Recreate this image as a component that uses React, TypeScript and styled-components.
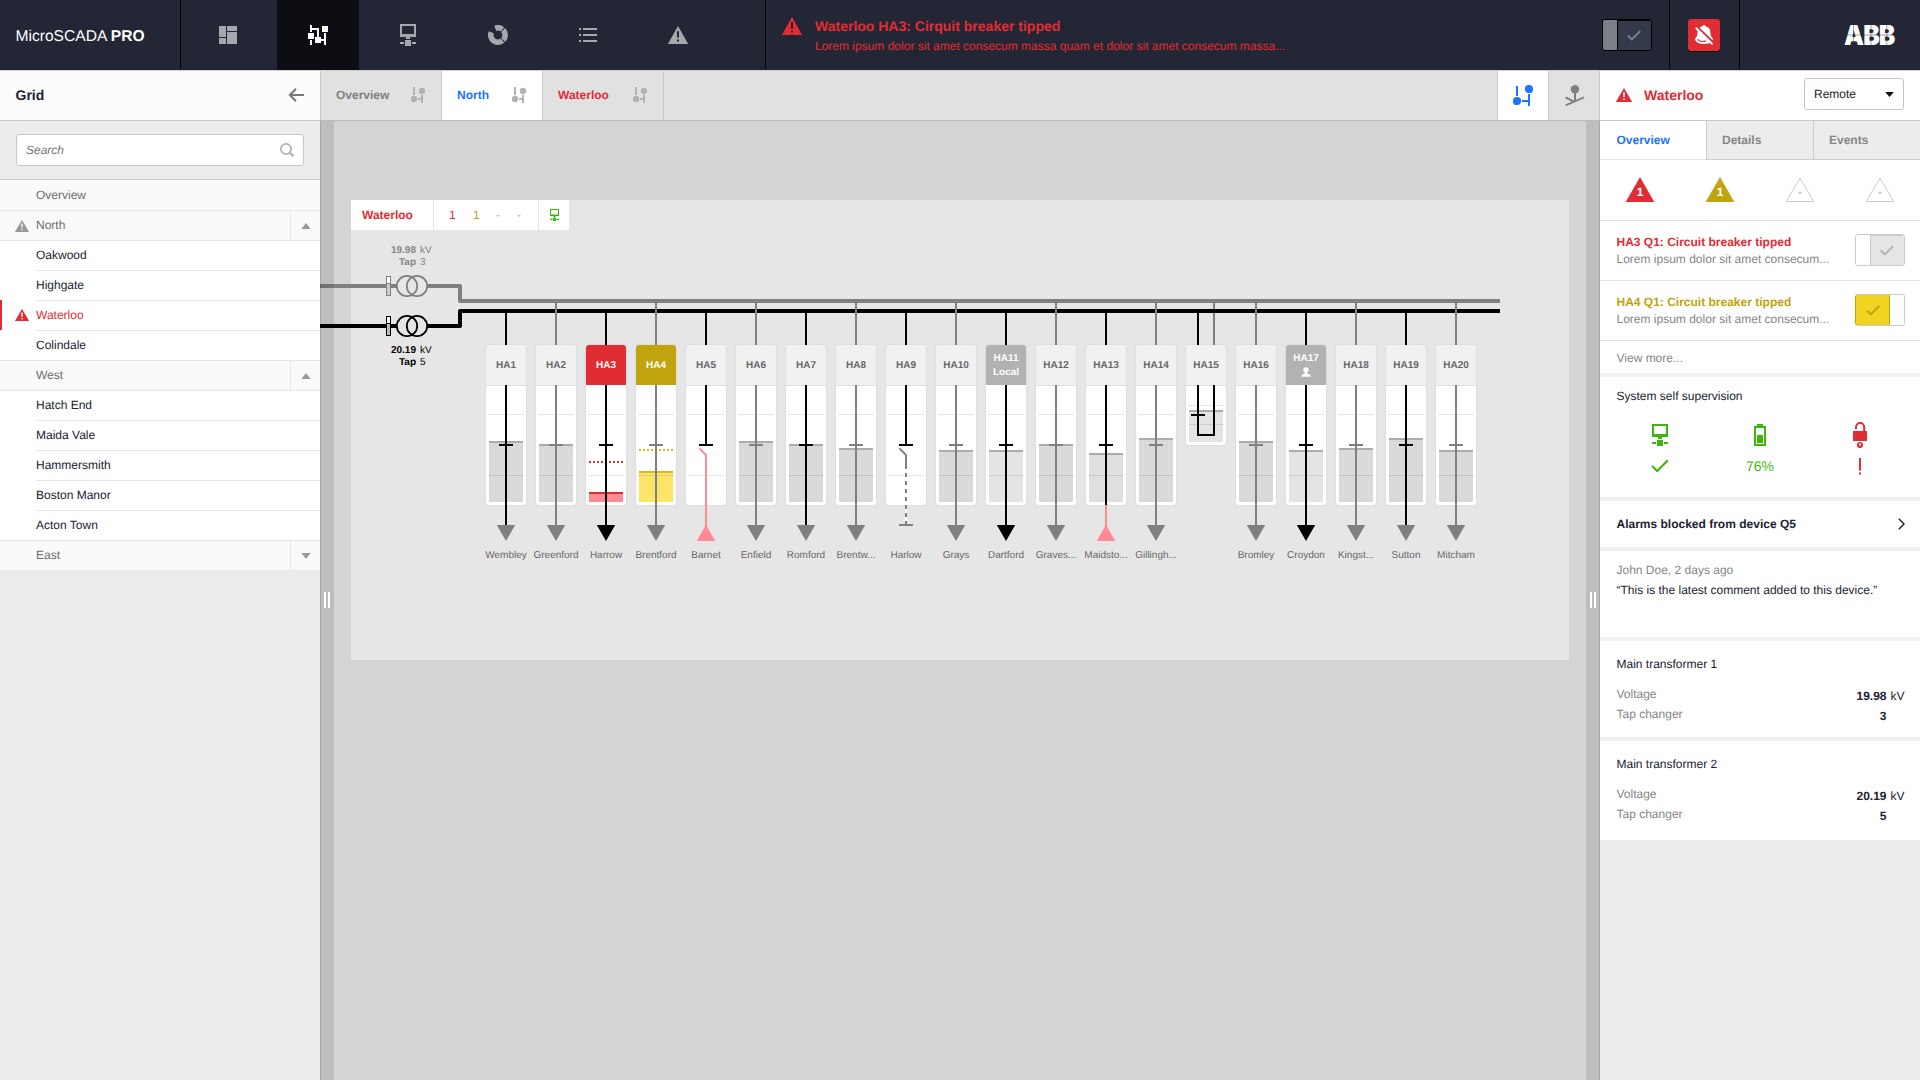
import React from "react";
import styled, { createGlobalStyle, css } from "styled-components";

const c = {
  navy: "#232635",
  red: "#e22c33",
  pink: "#ff8a93",
  yellow: "#c1a30e",
  blue: "#1c73ff",
  green: "#3fb60f",
  grey: "#808080",
  mid: "#b2b2b2",
  ink: "#202232",
};

const GlobalStyle = createGlobalStyle`
  * { box-sizing: border-box; }
  body {
    margin: 0;
    overflow: hidden;
    background: #ececec;
    font-family: "Liberation Sans", Arial, sans-serif;
    font-size: 12px;
    text-rendering: geometricPrecision;
    color: ${c.ink};
  }
  svg { display: block; flex: none; }
`;

/* ---------- icons ---------- */

const Warn = ({ w = 20, h = 18, color = "#a6a8ae" }) => (
  <svg width={w} height={h} viewBox="0 0 20 18" preserveAspectRatio="none">
    <path fill={color} fillRule="evenodd" d="M10 0L20.2 18H-.2ZM9 5.2v6.4h2V5.2ZM9 13.4v2.1h2v-2.1Z" />
  </svg>
);

const Monitor = ({ w = 16, h = 22, color = "#a6a8ae" }) => (
  <svg width={w} height={h} viewBox="0 0 16 22" preserveAspectRatio="none" fill={color}>
    <path fillRule="evenodd" d="M0 0h16v13H0ZM2 2v8h12V2Z" />
    <path d="M6 13h4v2H6ZM5 16h6v6H5ZM0 18h4v2H0ZM12 18h4v2h-4Z" />
  </svg>
);

const Dashboard = () => (
  <svg width="18" height="18" fill="#a6a8ae">
    <path d="M0 0h7v11H0ZM8 0h10v5H8ZM0 12h7v6H0ZM8 6h10v12H8Z" />
  </svg>
);

const GridIcon = () => (
  <svg width="20" height="20" fill="#fff">
    <path d="M2 0h2v3h7v9h2v2h3V8h2v12h-2v-4h-3v2H7v-6h2V5H4v2H2ZM14 1h6v6h-6ZM0 8h6v6H0ZM2 15h2v5H2Z" />
  </svg>
);

const polar = (deg: number) => {
  const a = ((deg - 90) * Math.PI) / 180;
  return `${(10 + 7.2 * Math.cos(a)).toFixed(2)} ${(10 + 7.2 * Math.sin(a)).toFixed(2)}`;
};

const Donut = () => (
  <svg width="20" height="20" fill="none" stroke="#a6a8ae" strokeWidth="5.6">
    <path d={`M${polar(-22)}A7.2 7.2 0 0 1 ${polar(38)}`} />
    <path d={`M${polar(45)}A7.2 7.2 0 0 1 ${polar(134)}`} />
    <path d={`M${polar(141)}A7.2 7.2 0 0 1 ${polar(292)}`} />
  </svg>
);

const List = () => (
  <svg width="18" height="14" fill="#a6a8ae">
    <path d="M0 0h2v2H0ZM4 0h14v2H4ZM0 6h2v2H0ZM4 6h14v2H4ZM0 12h2v2H0ZM4 12h14v2H4Z" />
  </svg>
);

const NodeSmall = () => (
  <svg width="14" height="16" fill="#b2b2b2">
    <path d="M2 0h2v8H2ZM7 11h3V8h2v8h-2v-3H7Z" />
    <circle cx="11" cy="4" r="3.2" />
    <circle cx="3" cy="12" r="3.2" />
  </svg>
);

const NodeLarge = () => (
  <svg width="20" height="21" fill={c.blue}>
    <path d="M3 1h2v10H3ZM9 15h6V9h2v12h-2v-4H9Z" />
    <circle cx="16" cy="4" r="4.1" />
    <circle cx="4" cy="16" r="4.1" />
  </svg>
);

const Topology = () => (
  <svg width="20" height="21" fill="none" stroke={c.grey} strokeWidth="2">
    <circle cx="10" cy="4.3" r="4.2" fill={c.grey} stroke="none" />
    <path d="M10 8v8M.6 12.5L9.5 16.8M.6 20.3L19 12.3" />
  </svg>
);

const BellOff = () => (
  <svg width="32" height="32">
    <path fill="#fff" d="M16 6c1 0 1.4.6 1.6 1.3 3.6.8 4.8 3.6 4.9 7 .1 2.400.8 3.500 2 4.800.9 1.200.3 2.500-.8 3.500C21.800 24.400 19 25 16 25s-5.800-.6-7.700-2.400c-1.100-1-1.700-2.300-.8-3.500 1.200-1.300 1.900-2.400 2-4.800.1-3.400 1.300-6.200 4.900-7C14.600 6.600 15 6 16 6Z" />
    <path fill="none" stroke={c.red} strokeWidth="1.200" d="M9.500 20.300c2 2.300 6 2.500 8.500 1.600" />
    <path stroke={c.red} strokeWidth="1.800" d="M9.500 7.800L26 24" />
    <path stroke="#fff" strokeWidth="1.900" d="M7.700 8.800L24.500 25.400" />
  </svg>
);

const Logo = () => (
  <svg width="60" height="40" viewBox="-5 -10 60 40" fill="#fff" fontFamily="Inter, 'Liberation Sans', sans-serif" fontSize="27.500" fontWeight="900">
    <text x="0" y="20" textLength="20" lengthAdjust="spacingAndGlyphs">A</text>
    <text x="19.300" y="20" textLength="16.500" lengthAdjust="spacingAndGlyphs">B</text>
    <text x="34.700" y="20" textLength="16.500" lengthAdjust="spacingAndGlyphs">B</text>
    <path stroke={c.navy} strokeWidth=".8" strokeOpacity=".55" d="M0 10H50M9.500 0V20M27 0V20M42.800 0V20" />
  </svg>
);

const Check = ({ color, w = 14, h = 11, sw = 2 }: { color: string; w?: number; h?: number; sw?: number }) => (
  <svg width={w} height={h} viewBox="0 0 14 11" fill="none" stroke={color} strokeWidth={sw}>
    <path d="M.8 5.500L4.800 9.400L13.200 1" />
  </svg>
);

const Battery = () => (
  <svg width="12" height="22" fill={c.green}>
    <path fillRule="evenodd" d="M3 0h6v2h3v20H0V2h3ZM2 4v16h8V4Z" />
    <path d="M3 11h6v8H3Z" />
  </svg>
);

const Lock = () => (
  <svg width="14" height="26">
    <path fill="none" stroke={c.red} strokeWidth="2" d="M3 7V5.200a4.100 4.100 0 0 1 8.200 0V9" />
    <path fill={c.red} d="M0 9h14v10H0Z" />
    <circle cx="7" cy="23" r="3.100" fill={c.red} />
    <path fill="#fff" d="M6.200 21.600h1.800v2h-1.800Z" />
  </svg>
);

const Bang = () => (
  <svg width="2" height="17" fill={c.red}>
    <path d="M0 0h2v12.500H0ZM0 14.500h2v2H0Z" />
  </svg>
);

const User = () => (
  <svg width="10" height="10" fill="#fff">
    <circle cx="5" cy="2.900" r="2.600" />
    <path d="M4 5h2v1.500l2.600.9c.8.400 1 1.200 1 2.400H.4c0-1.200.2-2 1-2.400L4 6.500Z" />
  </svg>
);

/* ---------- header ---------- */

const Page = styled.div`
  display: flex;
  flex-direction: column;
  width: 1920px;
  height: 1080px;
  background: #ececec;
`;

const Header = styled.header`
  display: flex;
  height: 70px;
  flex: none;
  background: ${c.navy};
`;

const headerCell = css`
  display: flex;
  height: 69px;
  border-right: 1px solid #000;
`;

const Brand = styled.div`
  ${headerCell}
  width: 181px;
  padding: 5px 0 0 15.5px;
  align-items: center;
  color: #fff;
  font-size: 15.6px;
  white-space: pre;
`;

const Nav = styled.nav`
  ${headerCell}
  width: 585px;
  height: 69px;
  padding-left: 6px;
  gap: 8px;
`;

const NavItem = styled.div<{ $active?: boolean; $dy?: number }>`
  display: flex;
  width: 82px;
  height: 70px;
  align-items: center;
  justify-content: center;
  padding-top: ${(p) => p.$dy ?? 0}px;
  background: ${(p) => (p.$active ? "#0d0e13" : "none")};
`;

const Alert = styled.div`
  ${headerCell}
  width: 904px;
  color: ${c.red};
`;

const AlertIcon = styled.div`
  padding: 17px 13px 0 16px;
`;

const AlertText = styled.div`
  flex: 1;
  padding-top: 16px;
`;

const AlertTitle = styled.div`
  font-size: 14px;
  font-weight: bold;
  line-height: 20px;
`;

const AlertSub = styled.div`
  line-height: 20px;
`;

const Toggle = styled.div<{ $kind: "dark" | "off" | "on" }>`
  display: flex;
  width: 50px;
  height: 32px;
  border-radius: 3px;
  overflow: hidden;
  flex: none;
  flex-direction: ${(p) => (p.$kind === "on" ? "row-reverse" : "row")};
  border: 1px solid ${(p) => (p.$kind === "dark" ? "#000" : "#cbcbcb")};
  ${(p) => p.$kind === "on" && css`border-width: 1px 1px 1px 0; background: #fff;`}
`;

const Knob = styled.span<{ $kind: "dark" | "off" | "on" }>`
  width: ${(p) => (p.$kind === "on" ? "auto" : "15px")};
  flex: ${(p) => (p.$kind === "on" ? "1" : "none")};
  background: ${(p) => (p.$kind === "dark" ? "#7b7f88" : "#fff")};
  border-right: ${(p) => (p.$kind === "dark" ? "1px solid #000" : p.$kind === "off" ? "1px solid #cbcbcb" : "none")};
`;

const Track = styled.span<{ $kind: "dark" | "off" | "on" }>`
  display: flex;
  align-items: center;
  justify-content: center;
  ${(p) =>
    p.$kind === "on"
      ? css`
          width: 35px;
          margin: -1px 0;
          border: 1px solid ${c.yellow};
          border-radius: 3px 0 0 3px;
          background: #f1d322;
        `
      : p.$kind === "off"
      ? css`
          flex: 1;
          background: #e5e5e5;
          box-shadow: inset 0 1px #cbcbcb;
          padding-right: 2px;
        `
      : css`
          flex: 1;
          background: #343a4a;
          box-shadow: inset 0 1px #000;
          padding-right: 1px;
        `}
`;

const ToggleSlot = styled.div`
  padding: 19px 17px 0 0;
`;

const MuteCell = styled.div`
  ${headerCell}
  width: 70px;
  padding: 19px 0 0 18px;
`;

const MuteButton = styled.div`
  width: 32px;
  height: 32px;
  border-radius: 3px;
  background: ${c.red};
  box-shadow: 0 1px #000;
`;

const LogoCell = styled.div`
  display: flex;
  flex: 1;
  justify-content: flex-end;
  padding: 15px 21px 0 0;
`;

/* ---------- columns ---------- */

const Main = styled.main`
  display: flex;
  flex: 1;
  min-height: 0;
`;

const Bar = styled.div`
  display: flex;
  height: 51px;
  flex: none;
  align-items: center;
  padding-bottom: 1px;
  border-top: 1px solid #cfcfd1;
  border-bottom: 1px solid #cacaca;
`;

const Sidebar = styled.aside`
  width: 320px;
  display: flex;
  flex-direction: column;
`;

const SideHead = styled(Bar)`
  padding: 0 16px 1px 15.5px;
  justify-content: space-between;
  background: #fcfcfc;
  font-size: 14px;
  font-weight: bold;
`;

const SearchWrap = styled.div`
  height: 59px;
  padding: 13px 16px 0;
  border-bottom: 1px solid #d0d0d0;
`;

const SearchBox = styled.div`
  display: flex;
  height: 32px;
  align-items: center;
  justify-content: space-between;
  padding: 0 9px;
  border: 1px solid #c8c8c8;
  border-radius: 3px;
  background: #fff;
  color: #777;
  font-style: italic;
`;

const Tree = styled.div`
  display: flex;
  flex-direction: column;
`;

const TreeRow = styled.div<{ $group?: boolean; $alarm?: boolean }>`
  display: flex;
  height: 30px;
  align-items: stretch;
  background: ${(p) => (p.$group ? "#fafafa" : "#fff")};
  color: ${(p) => (p.$alarm ? c.red : p.$group ? "#6c6c6c" : c.ink)};
  box-shadow: ${(p) => (p.$alarm ? `inset 2px 0 ${c.red}` : "none")};
`;

const TreeIcon = styled.span<{ $line?: boolean }>`
  display: flex;
  width: 36px;
  padding: 0 0 0 15px;
  align-items: center;
  border-top: ${(p) => (p.$line ? "1px solid #e6e6e6" : "none")};
`;

const TreeLabel = styled.span<{ $line?: boolean }>`
  flex: 1;
  line-height: ${(p) => (p.$line ? 29 : 30)}px;
  border-top: ${(p) => (p.$line ? "1px solid #e6e6e6" : "none")};
`;

const TreeToggle = styled.span`
  display: flex;
  width: 30px;
  align-items: center;
  justify-content: center;
  border: solid #e6e6e6;
  border-width: 1px 0 0 1px;
`;

const Center = styled.section`
  display: flex;
  flex-direction: column;
  width: 1280px;
`;

const TabBar = styled(Bar)`
  align-items: stretch;
  padding-bottom: 0;
  background: #e1e1e1;
  border-left: 1px solid #c8c8c8;
  border-right: 1px solid #c8c8c8;
  border-bottom-color: #bdbdbd;
`;

const Tab = styled.div<{ $w: number; $color: string; $active?: boolean }>`
  display: flex;
  width: ${(p) => p.$w}px;
  padding: 0 16px 1px 15px;
  align-items: center;
  justify-content: space-between;
  border-right: 1px solid #c8c8c8;
  background: ${(p) => (p.$active ? "#fff" : "none")};
  color: ${(p) => p.$color};
  font-weight: bold;
`;

const ViewButtons = styled.div`
  display: flex;
  margin-left: auto;
`;

const ViewButton = styled.div<{ $active?: boolean }>`
  display: flex;
  width: 51px;
  align-items: center;
  padding-left: ${(p) => (p.$active ? 15 : 16)}px;
  border-left: 1px solid #c8c8c8;
  background: ${(p) => (p.$active ? "#fff" : "none")};
`;

const Workspace = styled.div`
  display: flex;
  flex: 1;
  background: #d4d4d4;
`;

const Strip = styled.div<{ $side: "left" | "right" }>`
  position: relative;
  z-index: 1;
  display: flex;
  width: 14px;
  align-items: center;
  gap: 2px;
  padding-bottom: 1px;
  padding-left: ${(p) => (p.$side === "left" ? 3 : 4)}px;
  background: rgba(0, 0, 0, 0.1);
  border: 0 solid rgba(0, 0, 0, 0.12);
  border-${(p) => p.$side}-width: 1px;
`;

const Grip = styled.span`
  width: 2px;
  height: 16px;
  background: #fff;
`;

const Canvas = styled.div`
  flex: 1;
  padding: 79px 17px 0;
`;

const Station = styled.div`
  position: relative;
  height: 460px;
  background: #e6e6e6;
`;

const StationHead = styled.div`
  display: flex;
  width: 218px;
  height: 30px;
  gap: 1px;
`;

const HeadCell = styled.div<{ $w: number }>`
  display: flex;
  width: ${(p) => p.$w}px;
  align-items: center;
  justify-content: center;
  background: #fff;
`;

const StationName = styled(HeadCell)`
  justify-content: flex-start;
  padding-left: 11px;
  color: ${c.red};
  font-weight: bold;
`;

const Counts = styled(HeadCell)`
  justify-content: flex-start;
  padding-left: 15px;
`;

const Count = styled.span<{ $w: number; $color: string }>`
  width: ${(p) => p.$w}px;
  color: ${(p) => p.$color};
`;

const BusLines = styled.svg`
  position: absolute;
  left: -31px;
  top: 70px;
`;

const Readout = styled.div<{ $y: number; $color: string }>`
  position: absolute;
  left: 25px;
  top: ${(p) => p.$y}px;
  display: grid;
  grid-template-columns: 40px 20px;
  column-gap: 4px;
  font-size: 10px;
  line-height: 12px;
  color: ${(p) => p.$color};
  b { text-align: right; }
`;

const FeederRow = styled.div`
  position: absolute;
  left: 135px;
  top: 103px;
  display: flex;
  gap: 10px;
`;

const FeederBox = styled.div`
  position: relative;
  width: 40px;
  height: 262px;
  padding-top: 42px;
  display: flex;
  flex-direction: column;
  align-items: center;
`;

const Card = styled.div<{ $short?: boolean }>`
  width: 40px;
  height: ${(p) => (p.$short ? 100 : 160)}px;
  flex: none;
  border-radius: 3px;
  overflow: hidden;
  background: #fff;
`;

const CardRing = styled.div`
  border-radius: 3px;
  box-shadow: 0 0 0 1px #dedede;
`;

const CardHead = styled.div<{ $bg: string; $color: string; $line: boolean }>`
  display: flex;
  flex-direction: column;
  height: 40px;
  padding-top: 2px;
  align-items: center;
  justify-content: center;
  background: ${(p) => p.$bg};
  color: ${(p) => p.$color};
  box-shadow: ${(p) => (p.$line ? "0 1px #dcdcdc" : "none")};
  font-size: 10px;
  font-weight: bold;
  line-height: 14px;
`;

const IconLine = styled.span`
  display: flex;
  height: 12px;
  align-items: center;
  margin-bottom: 2px;
`;

const Wiring = styled.svg`
  position: absolute;
  left: 0;
  top: 0;
`;

const FeederName = styled.div`
  margin-top: 44px;
  font-size: 10px;
  line-height: 14px;
  color: #666;
  white-space: nowrap;
`;

/* ---------- details panel ---------- */

const Details = styled.aside`
  width: 320px;
  display: flex;
  flex-direction: column;
`;

const DetailsHead = styled(Bar)`
  padding: 0 16px 1px;
  background: #fff;
  color: ${c.red};
  font-size: 14px;
  font-weight: bold;
`;

const HeadName = styled.span`
  flex: 1;
  padding-left: 12px;
`;

const Select = styled.div`
  display: flex;
  width: 100px;
  height: 32px;
  margin-top: -2px;
  padding: 0 9px;
  align-items: center;
  justify-content: space-between;
  border: 1px solid #c4c4c4;
  border-radius: 3px;
  color: #222;
  font-size: 12px;
  font-weight: normal;
`;

const DetailTabs = styled.div`
  display: grid;
  grid-template-columns: 106px 107px 107px;
  height: 39px;
  flex: none;
`;

const DetailTab = styled.div<{ $active?: boolean }>`
  padding-left: ${(p) => (p.$active ? 16.5 : 15)}px;
  line-height: 38px;
  font-weight: bold;
  color: ${(p) => (p.$active ? c.blue : "#858585")};
  background: ${(p) => (p.$active ? "#fff" : "#ececec")};
  border-bottom: 1px solid ${(p) => (p.$active ? "#e4e4e4" : "#cdcdcd")};
  border-left: ${(p) => (p.$active ? "none" : "1px solid #cdcdcd")};
`;

const Levels = styled.div`
  display: grid;
  grid-template-columns: repeat(4, 80px);
  justify-items: center;
  height: 60px;
  padding-top: 17px;
  background: #fff;
`;

const AlarmRow = styled.div`
  display: flex;
  height: 60px;
  padding: 13px 15px 0 16.5px;
  justify-content: space-between;
  border-top: 1px solid #e2e2e2;
  background: #fff;
`;

const AlarmText = styled.div<{ $color: string }>`
  line-height: 17px;
  color: #858585;
  b { color: ${(p) => p.$color}; }
`;

const ViewMore = styled.div`
  height: 33px;
  padding-left: 16.5px;
  line-height: 34px;
  color: #858585;
  border-top: 1px solid #e2e2e2;
  background: #fff;
`;

const Section = styled.div<{ $h: number; $pt: number }>`
  height: ${(p) => p.$h}px;
  padding: ${(p) => p.$pt}px 15.5px 0 16.5px;
  border-top: 4px solid #f1f1f1;
  background: #fff;
  line-height: 20px;
`;

const LinkSection = styled(Section)`
  display: flex;
  padding-right: 15px;
  justify-content: space-between;
  font-weight: bold;
`;

const Supervision = styled.div`
  display: grid;
  grid-template-columns: repeat(3, 100px);
  justify-content: center;
  width: 300px;
  margin-left: -6.5px;
  padding-top: 16px;
`;

const SupItem = styled.div`
  display: flex;
  flex-direction: column;
  align-items: center;
  color: ${c.green};
`;

const SupIcon = styled.div`
  display: flex;
  height: 26px;
  align-items: center;
`;

const SupValue = styled.div`
  display: flex;
  height: 20px;
  margin-top: 8px;
  align-items: center;
  font-size: 14px;
`;

const Muted = styled.div`
  color: #858585;
`;

const Reading = styled.div`
  display: grid;
  grid-template-columns: 1fr auto 15px;
  column-gap: 3px;
  color: #858585;
  b, i { position: relative; top: 2px; color: ${c.ink}; font-style: normal; text-align: right; }
`;

const ReadingTitle = styled.div`
  margin-bottom: 10px;
`;

/* ---------- data ---------- */

type Feeder = {
  name: string;
  bus: "a" | "b";
  place?: string;
  top?: number;
  fill?: string;
  kind?: "plain" | "red" | "yellow" | "local" | "user" | "open" | "dashed" | "back" | "loop";
  darkArrow?: boolean;
};

const FILL = "#d9d9d9";
const LIGHT = "#e4e4e4";

const feeders: Feeder[] = [
  { name: "HA1", bus: "b", place: "Wembley", top: 441 },
  { name: "HA2", bus: "a", place: "Greenford", top: 444 },
  { name: "HA3", bus: "b", place: "Harrow", top: 492, kind: "red", darkArrow: true },
  { name: "HA4", bus: "a", place: "Brentford", top: 471, kind: "yellow" },
  { name: "HA5", bus: "b", place: "Barnet", kind: "open" },
  { name: "HA6", bus: "a", place: "Enfield", top: 441 },
  { name: "HA7", bus: "b", place: "Romford", top: 444 },
  { name: "HA8", bus: "a", place: "Brentw...", top: 448 },
  { name: "HA9", bus: "b", place: "Harlow", kind: "dashed" },
  { name: "HA10", bus: "a", place: "Grays", top: 450 },
  { name: "HA11", bus: "b", place: "Dartford", top: 450, fill: LIGHT, kind: "local", darkArrow: true },
  { name: "HA12", bus: "a", place: "Graves...", top: 444 },
  { name: "HA13", bus: "b", place: "Maidsto...", top: 453, fill: "#dfdfdf", kind: "back" },
  { name: "HA14", bus: "a", place: "Gillingh...", top: 438 },
  { name: "HA15", bus: "b", top: 410, fill: LIGHT, kind: "loop" },
  { name: "HA16", bus: "a", place: "Bromley", top: 441 },
  { name: "HA17", bus: "b", place: "Croydon", top: 450, fill: LIGHT, kind: "user", darkArrow: true },
  { name: "HA18", bus: "a", place: "Kingst...", top: 448 },
  { name: "HA19", bus: "b", place: "Sutton", top: 438 },
  { name: "HA20", bus: "a", place: "Mitcham", top: 450 },
];

const headStyle = (kind?: string): [string, string, boolean] => {
  if (kind === "red") return [c.red, "#fff", false];
  if (kind === "yellow") return [c.yellow, "#fff", false];
  if (kind === "local" || kind === "user") return [c.mid, "#fff", false];
  return ["#f1f1f1", "#666", true];
};

/* Vertical positions inside the wiring drawing are counted from the upper bus bar. */
const Y = (v: number) => v - 303;

const FeederWiring = ({ f }: { f: Feeder }) => {
  const ink = f.bus === "a" ? c.grey : "#000";
  const loop = f.kind === "loop";
  const bottom = loop ? 442 : 502;
  const edge = f.kind === "red" ? c.red : f.kind === "yellow" ? "#dfb71c" : "#acacac";
  const fill = f.kind === "red" ? c.pink : f.kind === "yellow" ? "#fae568" : f.fill ?? FILL;
  const limit = f.kind === "red" ? 462 : f.kind === "yellow" ? 450 : 0;
  const cut = f.kind === "open" || f.kind === "dashed";
  const back = f.kind === "open" || f.kind === "back";
  const end = cut ? 446 : f.kind === "back" ? 505 : 526;
  const grid = loop ? [405.5, 424.5] : [414.5, 475.5];
  return (
    <Wiring width="40" height="240" fill="none">
      {f.top && <rect x="3" y={Y(f.top)} width="34" height={bottom - f.top} fill={fill} />}
      {f.top && <rect x="3" y={Y(f.top)} width="34" height="2" fill={edge} />}
      {grid.map((g) => (
        <path key={g} d={`M2.500 ${Y(g)}H38`} stroke="#000" strokeOpacity=".13" strokeDasharray="3 1" />
      ))}
      {limit > 0 && (
        <path d={`M3 ${Y(limit)}H37`} stroke={edge} strokeWidth="2" strokeDasharray="2 2" />
      )}
      {loop ? (
        <g strokeWidth="2">
          <path stroke="#000" d={`M12 ${Y(313)}V42M12 82V${Y(435)}H28V82M5 ${Y(415)}H19`} />
          <path stroke={c.grey} d={`M28 0V${Y(309)}M28 ${Y(313)}V42`} />
        </g>
      ) : (
        <g strokeWidth="2">
          <path stroke={ink} d={`M20 ${f.bus === "a" ? 0 : Y(313)}V42M20 82V${Y(end)}M13 ${Y(445)}H27`} />
          {f.kind === "open" && <path stroke={c.pink} d={`M13.400 ${Y(448.4)}L20 ${Y(455)}V${Y(528)}`} />}
          {f.kind === "back" && <path stroke={c.pink} d={`M20 ${Y(505)}V${Y(528)}`} />}
          {f.kind === "dashed" && (
            <>
              <path stroke="#fff" d={`M20 ${Y(468)}V${Y(524)}`} />
              <path stroke={c.grey} d={`M13.400 ${Y(448.4)}L20 ${Y(455)}V${Y(469)}M13 ${Y(525)}H27`} />
              <path stroke={c.grey} strokeDasharray="4 4" d={`M20 ${Y(473)}V${Y(524)}`} />
            </>
          )}
        </g>
      )}
      {back && <path fill={c.pink} d={`M20 ${Y(524.5)}L29.200 ${Y(541)}H10.800Z`} />}
      {!loop && !back && f.kind !== "dashed" && (
        <path fill={f.darkArrow ? "#000" : c.grey} d={`M10.800 ${Y(525)}H29.200L20 ${Y(541)}Z`} />
      )}
    </Wiring>
  );
};

const FeederColumn = ({ f }: { f: Feeder }) => {
  const [bg, color, line] = headStyle(f.kind);
  return (
    <FeederBox>
      <CardRing>
        <Card $short={f.kind === "loop"}>
          <CardHead $bg={bg} $color={color} $line={line}>
            <span>{f.name}</span>
            {f.kind === "local" && <span>Local</span>}
            {f.kind === "user" && (
              <IconLine>
                <User />
              </IconLine>
            )}
          </CardHead>
        </Card>
      </CardRing>
      <FeederWiring f={f} />
      {f.place && <FeederName>{f.place}</FeederName>}
    </FeederBox>
  );
};

const Transformer = ({ y, color, low }: { y: number; color: string; low: string }) => (
  <g fill="none" stroke={color}>
    <path strokeWidth="4" d={`M0 ${y}H66M71 ${y}H76M108 ${y}H140`} />
    <rect x="66.500" y={y - 9.5} width="4" height="19" fill="#fff" />
    <path stroke="none" fill={low} d={`M67 ${y - 2}h3v11h-3Z`} />
    <path d={`M66 ${y - 2.500}h5`} />
    <circle cx="87" cy={y} r="10.200" strokeWidth="1.800" />
    <circle cx="97" cy={y} r="10.200" strokeWidth="1.800" />
  </g>
);

const tree: { label: string; group?: boolean; alarm?: boolean; warn?: boolean; toggle?: "up" | "down" }[] = [
  { label: "Overview", group: true },
  { label: "North", group: true, warn: true, toggle: "up" },
  { label: "Oakwood" },
  { label: "Highgate" },
  { label: "Waterloo", alarm: true },
  { label: "Colindale" },
  { label: "West", group: true, toggle: "up" },
  { label: "Hatch End" },
  { label: "Maida Vale" },
  { label: "Hammersmith" },
  { label: "Boston Manor" },
  { label: "Acton Town" },
  { label: "East", group: true, toggle: "down" },
];

/* The rule above a row spans its full width next to a group, and starts at the label otherwise. */
const fullLine = (i: number) => i > 0 && Boolean(tree[i].group || tree[i - 1].group);

const Level = ({ fill, label }: { fill?: string; label: string }) => (
  <svg width="30" height="26">
    <path
      d={fill ? "M15 0L29.300 25H.7Z" : "M15 .9L28.600 24.500H1.400Z"}
      fill={fill ?? "none"}
      stroke={fill ? "none" : "#cbcbcb"}
    />
    <text
      x="15"
      y="19.200"
      textAnchor="middle"
      fontSize="12"
      fontWeight="bold"
      fill={fill ? "#fff" : "#cbcbcb"}
    >
      {label}
    </text>
  </svg>
);

const TransformerSection = ({ h, n, kv, tap }: { h: number; n: number; kv: string; tap: string }) => (
  <Section $h={h} $pt={13}>
    <ReadingTitle>Main transformer {n}</ReadingTitle>
    <Reading>
      <span>Voltage</span>
      <b>{kv}</b>
      <i>kV</i>
    </Reading>
    <Reading>
      <span>Tap changer</span>
      <b>{tap}</b>
      <i />
    </Reading>
  </Section>
);

export default function App() {
  return (
    <Page>
      <GlobalStyle />
      <Header>
        <Brand>MicroSCADA <b>PRO</b></Brand>
        <Nav>
          <NavItem><Dashboard /></NavItem>
          <NavItem $active><GridIcon /></NavItem>
          <NavItem><Monitor /></NavItem>
          <NavItem><Donut /></NavItem>
          <NavItem><List /></NavItem>
          <NavItem $dy={-2}><Warn /></NavItem>
        </Nav>
        <Alert>
          <AlertIcon><Warn w={20} color={c.red} /></AlertIcon>
          <AlertText>
            <AlertTitle>Waterloo HA3: Cirquit breaker tipped</AlertTitle>
            <AlertSub>Lorem ipsum dolor sit amet consecum massa quam et dolor sit amet consecum massa...</AlertSub>
          </AlertText>
          <ToggleSlot>
            <Toggle $kind="dark">
              <Knob $kind="dark" />
              <Track $kind="dark"><Check color="#7b7f88" /></Track>
            </Toggle>
          </ToggleSlot>
        </Alert>
        <MuteCell>
          <MuteButton><BellOff /></MuteButton>
        </MuteCell>
        <LogoCell><Logo /></LogoCell>
      </Header>

      <Main>
        <Sidebar>
          <SideHead>
            Grid
            <svg width="16" height="14" fill="none" stroke="#777" strokeWidth="2">
              <path d="M16 7H1.800M8 .8L1.800 7L8 13.200" />
            </svg>
          </SideHead>
          <SearchWrap>
            <SearchBox>
              Search
              <svg width="14" height="14" fill="none" stroke="#b2b2b2" strokeWidth="1.800">
                <circle cx="6" cy="6" r="5.100" />
                <path strokeWidth="2.200" d="M9.600 9.600L13.300 13.200" />
              </svg>
            </SearchBox>
          </SearchWrap>
          <Tree>
            {tree.map((r, i) => (
              <TreeRow key={r.label} $group={r.group} $alarm={r.alarm}>
                <TreeIcon $line={fullLine(i)}>
                  {(r.warn || r.alarm) && <Warn w={14} h={12} color={r.alarm ? c.red : "#999"} />}
                </TreeIcon>
                <TreeLabel $line={i > 0}>{r.label}</TreeLabel>
                {r.toggle && (
                  <TreeToggle>
                    <svg width="10" height="6" fill="#999">
                      <path d={r.toggle === "up" ? "M5 0L9.600 6H.4Z" : "M5 6L9.600 0H.4Z"} />
                    </svg>
                  </TreeToggle>
                )}
              </TreeRow>
            ))}
          </Tree>
        </Sidebar>

        <Center>
          <TabBar>
            <Tab $w={121} $color={c.grey}>Overview<NodeSmall /></Tab>
            <Tab $w={101} $color={c.blue} $active>North<NodeSmall /></Tab>
            <Tab $w={121} $color={c.red}>Waterloo<NodeSmall /></Tab>
            <ViewButtons>
              <ViewButton $active><NodeLarge /></ViewButton>
              <ViewButton><Topology /></ViewButton>
            </ViewButtons>
          </TabBar>
          <Workspace>
            <Strip $side="left"><Grip /><Grip /></Strip>
            <Canvas>
              <Station>
                <StationHead>
                  <StationName $w={82}>Waterloo</StationName>
                  <Counts $w={104}>
                    <Count $w={24} $color={c.red}>1</Count>
                    <Count $w={23} $color={c.yellow}>1</Count>
                    <Count $w={21} $color="#b2b2b2">-</Count>
                    <Count $w={10} $color="#b2b2b2">-</Count>
                  </Counts>
                  <HeadCell $w={30}><Monitor w={9} h={12} color={c.green} /></HeadCell>
                </StationHead>
                <BusLines width="1200" height="80" viewBox="0 70 1200 80">
                  <Transformer y={86} color={c.grey} low="#ccc" />
                  <Transformer y={126} color="#000" low="#bbb" />
                  <g fill="none" strokeWidth="4" strokeLinejoin="round">
                    <path stroke={c.grey} d="M120 86H140V101H1180" />
                    <path stroke="#000" d="M120 126H140V111H1180" />
                  </g>
                </BusLines>
                <Readout $y={45} $color="#858585">
                  <b>19.98</b><span>kV</span>
                  <b>Tap</b><span>3</span>
                </Readout>
                <Readout $y={145} $color="#000">
                  <b>20.19</b><span>kV</span>
                  <b>Tap</b><span>5</span>
                </Readout>
                <FeederRow>
                  {feeders.map((f) => <FeederColumn key={f.name} f={f} />)}
                </FeederRow>
              </Station>
            </Canvas>
            <Strip $side="right"><Grip /><Grip /></Strip>
          </Workspace>
        </Center>

        <Details>
          <DetailsHead>
            <Warn w={16} h={14} color={c.red} />
            <HeadName>Waterloo</HeadName>
            <Select>
              Remote
              <svg width="9" height="5" fill="#111"><path d="M.2 0H8.800L4.500 5Z" /></svg>
            </Select>
          </DetailsHead>
          <DetailTabs>
            <DetailTab $active>Overview</DetailTab>
            <DetailTab>Details</DetailTab>
            <DetailTab>Events</DetailTab>
          </DetailTabs>
          <Levels>
            <Level fill={c.red} label="1" />
            <Level fill={c.yellow} label="1" />
            <Level label="-" />
            <Level label="-" />
          </Levels>
          <AlarmRow>
            <AlarmText $color={c.red}>
              <b>HA3 Q1: Circuit breaker tipped</b>
              <div>Lorem ipsum dolor sit amet consecum...</div>
            </AlarmText>
            <Toggle $kind="off">
              <Knob $kind="off" />
              <Track $kind="off"><Check color="#b5b5b5" /></Track>
            </Toggle>
          </AlarmRow>
          <AlarmRow>
            <AlarmText $color={c.yellow}>
              <b>HA4 Q1: Circuit breaker tipped</b>
              <div>Lorem ipsum dolor sit amet consecum...</div>
            </AlarmText>
            <Toggle $kind="on">
              <Knob $kind="on" />
              <Track $kind="on"><Check color="#c1a30e" /></Track>
            </Toggle>
          </AlarmRow>
          <ViewMore>View more...</ViewMore>
          <Section $h={124} $pt={9}>
            System self supervision
            <Supervision>
              <SupItem>
                <SupIcon><Monitor color={c.green} /></SupIcon>
                <SupValue><Check color={c.green} w={18} h={14} sw={1.7} /></SupValue>
              </SupItem>
              <SupItem>
                <SupIcon><Battery /></SupIcon>
                <SupValue>76%</SupValue>
              </SupItem>
              <SupItem>
                <SupIcon><Lock /></SupIcon>
                <SupValue><Bang /></SupValue>
              </SupItem>
            </Supervision>
          </Section>
          <LinkSection $h={50} $pt={13}>
            Alarms blocked from device Q5
            <svg width="7" height="20" fill="none" stroke={c.ink} strokeWidth="1.400">
              <path d="M.8 4.800L6 10L.8 15.200" />
            </svg>
          </LinkSection>
          <Section $h={90} $pt={9}>
            <Muted>John Doe, 2 days ago</Muted>
            “This is the latest comment added to this device.”
          </Section>
          <TransformerSection h={100} n={1} kv="19.98" tap="3" />
          <TransformerSection h={103} n={2} kv="20.19" tap="5" />
        </Details>
      </Main>
    </Page>
  );
}
